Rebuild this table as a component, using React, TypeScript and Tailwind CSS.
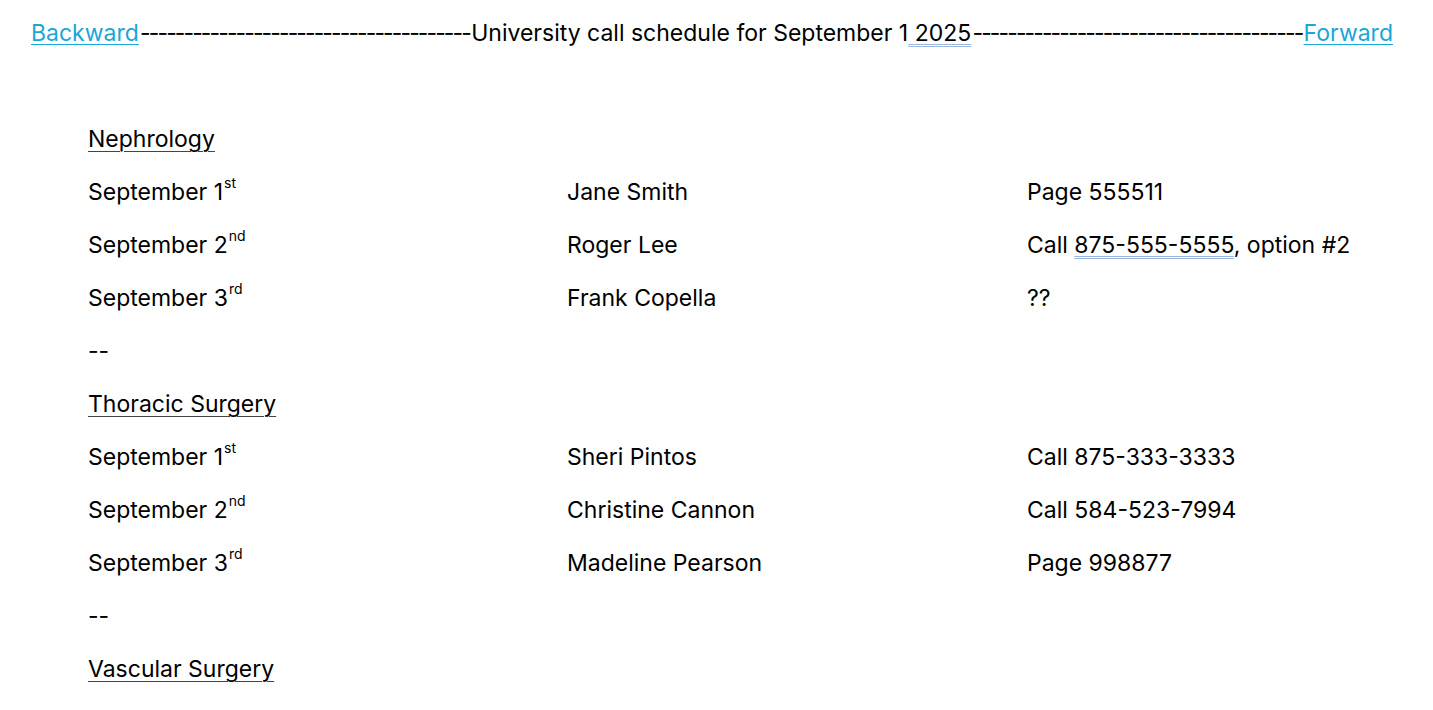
const FONT = "font-['Inter','Noto_Sans',sans-serif]";

type Row = { day: number; suffix: string; name: string; contact: React.ReactNode };

const sections: { title: string; rows: Row[] }[] = [
  {
    title: "Nephrology",
    rows: [
      { day: 1, suffix: "st", name: "Jane Smith", contact: "Page 555511" },
      {
        day: 2,
        suffix: "nd",
        name: "Roger Lee",
        contact: (
          <>
            Call{" "}
            <span className="underline decoration-double decoration-[#9bb7e0] decoration-1 underline-offset-[3px]">
              875-555-5555
            </span>
            , option #2
          </>
        ),
      },
      { day: 3, suffix: "rd", name: "Frank Copella", contact: "??" },
    ],
  },
  {
    title: "Thoracic Surgery",
    rows: [
      { day: 1, suffix: "st", name: "Sheri Pintos", contact: "Call 875-333-3333" },
      { day: 2, suffix: "nd", name: "Christine Cannon", contact: "Call 584-523-7994" },
      { day: 3, suffix: "rd", name: "Madeline Pearson", contact: "Page 998877" },
    ],
  },
  { title: "Vascular Surgery", rows: [] },
];

const DASHES = "-".repeat(38);

export default function App() {
  return (
    <div className={`${FONT} w-[1433px] h-[710px] bg-white text-black overflow-hidden`}>
      <div className="flex items-center justify-between h-[24px] mt-[21px] pl-[31px] pr-[40px] text-[23px] leading-none whitespace-nowrap">
        <a className="text-[#1aa6d8] underline underline-offset-[3px] decoration-1">Backward</a>
        <span className="tracking-[-1.9px]">{DASHES}</span>
        <span>
          University call schedule for September 1
          <span className="underline decoration-double decoration-[#9bb7e0] decoration-1 underline-offset-[3px]">
            {" "}2025
          </span>
        </span>
        <span className="tracking-[-1.9px]">{DASHES}</span>
        <a className="text-[#1aa6d8] underline underline-offset-[3px] decoration-1">Forward</a>
      </div>

      <div className="pl-[88px] pt-[79px] text-[23px]">
        {sections.map((s, si) => (
          <div key={s.title}>
            <div className="h-[53px] leading-[30px] underline decoration-1 underline-offset-[4px] decoration-[#444]">
              {s.title}
            </div>
            {s.rows.map((r) => (
              <div key={r.day} className="grid grid-cols-[479px_460px_1fr] h-[53px] leading-[30px]">
                <div>
                  September {r.day}
                  <sup className="text-[14px] align-[5px] ml-[1px]">{r.suffix}</sup>
                </div>
                <div>{r.name}</div>
                <div>{r.contact}</div>
              </div>
            ))}
            {si < sections.length - 1 && <div className="h-[53px] leading-[30px]">--</div>}
          </div>
        ))}
      </div>
    </div>
  );
}
